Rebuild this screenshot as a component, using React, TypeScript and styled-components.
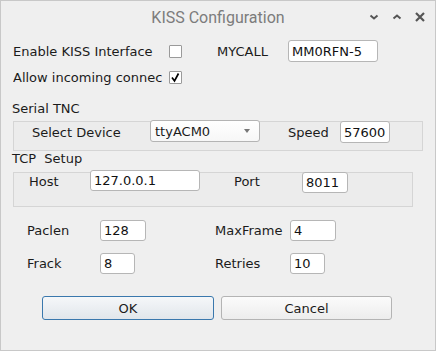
import styled, { createGlobalStyle } from 'styled-components'

const GlobalStyle = createGlobalStyle`
  html, body {
    margin: 0;
    padding: 0;
    background: #efefef;
  }
`

/* dialog frame */
const Window = styled.div`
  width: 436px;
  height: 351px;
  box-sizing: border-box;
  border: 1px solid #c8c8c8;
  background: #efefef;
  display: flex;
  flex-direction: column;
  font-family: 'DejaVu Sans', sans-serif;
  font-size: 13px;
  color: #1b1b1b;
`

const TitleBar = styled.div`
  height: 32px;
  display: grid;
  grid-template-columns: 1fr auto 1fr;
  align-items: center;
`

const Title = styled.div`
  grid-column: 2;
  font-family: Roboto, 'Liberation Sans', sans-serif;
  font-size: 16px;
  color: #7c7c7c;
`

const Controls = styled.div`
  grid-column: 3;
  justify-self: end;
  display: flex;
  gap: 9px;
  padding-right: 8px;
`

const ControlIcon = styled.svg`
  width: 14px;
  height: 14px;
  display: block;
`

const Body = styled.div`
  display: flex;
  flex-direction: column;
  padding: 0 12px;
`

const Row = styled.div<{ $top: number }>`
  display: flex;
  align-items: center;
  height: 22px;
  margin-top: ${({ $top }) => $top}px;
`

const Label = styled.span<{ $w: number; $left?: number }>`
  width: ${({ $w }) => $w}px;
  margin-left: ${({ $left }) => $left ?? 0}px;
  flex: none;
  white-space: nowrap;
  overflow: hidden;
`

const Check = styled.span`
  width: 13px;
  height: 13px;
  box-sizing: border-box;
  border: 1px solid #9a9a9a;
  border-radius: 1px;
  background: #fff;
  display: flex;
  align-items: center;
  justify-content: center;
  flex: none;
`

const Input = styled.div<{ $w: number; $h?: number; $top?: number }>`
  width: ${({ $w }) => $w}px;
  height: ${({ $h }) => $h ?? 22}px;
  margin-top: ${({ $top }) => $top ?? 0}px;
  box-sizing: border-box;
  border: 1px solid #b6b6b6;
  border-radius: 3px;
  background: #fff;
  padding: 0 3px;
  display: flex;
  align-items: center;
  flex: none;
  color: #111;
`

const SectionLabel = styled.div<{ $top: number }>`
  margin-top: ${({ $top }) => $top}px;
  margin-left: -1px;
  height: 18px;
  line-height: 18px;
  white-space: pre;
`

const GroupFrame = styled.div<{ $w: number; $h: number; $top: number; $pad: number }>`
  width: ${({ $w }) => $w}px;
  height: ${({ $h }) => $h}px;
  margin-top: ${({ $top }) => $top}px;
  padding-left: ${({ $pad }) => $pad}px;
  box-sizing: border-box;
  border: 1px solid #d5d5d5;
  background: #ececec;
  display: flex;
  align-items: flex-start;
`

const FrameLabel = styled.span<{ $w: number; $left?: number; $h: number }>`
  width: ${({ $w }) => $w}px;
  margin-left: ${({ $left }) => $left ?? 0}px;
  height: ${({ $h }) => $h}px;
  line-height: ${({ $h }) => $h}px;
  flex: none;
  white-space: nowrap;
`

const Combo = styled.div`
  width: 110px;
  height: 22px;
  margin-top: -2px;
  box-sizing: border-box;
  border: 1px solid #b4b4b4;
  border-radius: 3px;
  background: linear-gradient(#ffffff, #f7f7f7);
  padding: 0 9px 0 4px;
  display: flex;
  align-items: center;
  justify-content: space-between;
  flex: none;
`

const ComboArrow = styled.span`
  width: 0;
  height: 0;
  border-left: 3.5px solid transparent;
  border-right: 3.5px solid transparent;
  border-top: 4px solid #777;
`

const ParamGrid = styled.div`
  margin-top: 13px;
  padding-left: 14px;
  display: grid;
  grid-template-columns: 188px 1fr;
  row-gap: 12px;
`

const ParamCell = styled.div`
  display: flex;
  align-items: center;
  height: 21px;
`

const ButtonRow = styled.div`
  margin-top: 22px;
  padding-left: 29px;
  display: flex;
  gap: 7px;
`

const Button = styled.div<{ $w: number; $default?: boolean }>`
  width: ${({ $w }) => $w}px;
  height: 24px;
  box-sizing: border-box;
  border: 1px solid ${({ $default }) => ($default ? '#3a78ad' : '#b4b4b4')};
  border-radius: 3px;
  background: ${({ $default }) =>
    $default ? 'linear-gradient(#f5f7f9, #e1e6eb)' : 'linear-gradient(#fbfbfb, #ededed)'};
  display: flex;
  align-items: center;
  justify-content: center;
  color: #1b1b1b;
`

const CheckMark = () => (
  <svg width="11" height="11" viewBox="0 0 11 11">
    <polyline points="2,5.5 4.5,9 8.5,1.5" fill="none" stroke="#000" strokeWidth="1.7" />
  </svg>
)

export default function App() {
  return (
    <>
      <GlobalStyle />
      <Window>
        <TitleBar>
          <Title>KISS Configuration</Title>
          <Controls>
            <ControlIcon viewBox="0 0 14 14">
              <polyline points="3.5,5.5 7,8.5 10.5,5.5" fill="none" stroke="#555" strokeWidth="2" />
            </ControlIcon>
            <ControlIcon viewBox="0 0 14 14">
              <polyline points="3.5,8.5 7,5.5 10.5,8.5" fill="none" stroke="#555" strokeWidth="2" />
            </ControlIcon>
            <ControlIcon viewBox="0 0 14 14">
              <path d="M3 3 L11 11 M11 3 L3 11" fill="none" stroke="#555" strokeWidth="2.2" />
            </ControlIcon>
          </Controls>
        </TitleBar>

        <Body>
          <Row $top={7}>
            <Label $w={156}>Enable KISS Interface</Label>
            <Check />
            <Label $w={71} $left={35}>MYCALL</Label>
            <Input $w={90}>MM0RFN-5</Input>
          </Row>
          <Row $top={4}>
            <Label $w={156}>Allow incoming connec</Label>
            <Check>
              <CheckMark />
            </Check>
          </Row>

          <SectionLabel $top={12}>Serial TNC</SectionLabel>
          <GroupFrame $w={410} $h={30} $top={3} $pad={18}>
            <FrameLabel $w={118} $h={21}>Select Device</FrameLabel>
            <Combo>
              <span>ttyACM0</span>
              <ComboArrow />
            </Combo>
            <FrameLabel $w={52} $left={28} $h={21}>Speed</FrameLabel>
            <Input $w={50} $top={-1}>57600</Input>
          </GroupFrame>

          <SectionLabel $top={-1}>TCP  Setup</SectionLabel>
          <GroupFrame $w={400} $h={35} $top={4} $pad={15}>
            <FrameLabel $w={61} $h={18}>Host</FrameLabel>
            <Input $w={110} $h={21} $top={-3}>127.0.0.1</Input>
            <FrameLabel $w={68} $left={34} $h={18}>Port</FrameLabel>
            <Input $w={46} $h={21} $top={-1}>8011</Input>
          </GroupFrame>

          <ParamGrid>
            <ParamCell>
              <Label $w={73}>Paclen</Label>
              <Input $w={46} $h={21}>128</Input>
            </ParamCell>
            <ParamCell>
              <Label $w={75}>MaxFrame</Label>
              <Input $w={46} $h={21}>4</Input>
            </ParamCell>
            <ParamCell>
              <Label $w={73}>Frack</Label>
              <Input $w={35} $h={21}>8</Input>
            </ParamCell>
            <ParamCell>
              <Label $w={75}>Retries</Label>
              <Input $w={35} $h={21}>10</Input>
            </ParamCell>
          </ParamGrid>

          <ButtonRow>
            <Button $w={172} $default>OK</Button>
            <Button $w={171}>Cancel</Button>
          </ButtonRow>
        </Body>
      </Window>
    </>
  )
}
